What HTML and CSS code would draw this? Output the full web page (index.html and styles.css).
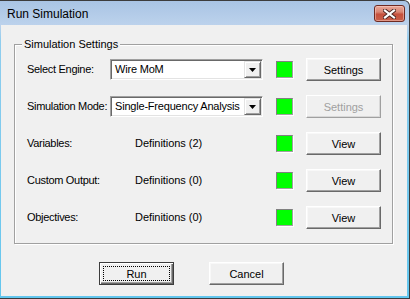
FILE: index.html
```html
<!DOCTYPE html>
<html>
<head>
<meta charset="utf-8">
<link rel="stylesheet" href="styles.css">
</head>
<body>
<div class="window">
  <div class="titlebar">
    <span class="title">Run Simulation</span>
    <div class="close">
      <svg width="13" height="10" viewBox="0 0 13 10">
        <path d="M2 1.5 L11 8.5 M11 1.5 L2 8.5" stroke="#4a2420" stroke-width="4" stroke-linecap="square" fill="none"/>
        <path d="M2 1.5 L11 8.5 M11 1.5 L2 8.5" stroke="#ffffff" stroke-width="2.2" stroke-linecap="square" fill="none"/>
      </svg>
    </div>
  </div>
  <div class="client">
    <div class="group">
      <div class="legend">Simulation Settings</div>
      <div class="grid">
        <div class="label">Select Engine:</div>
        <div class="combo">
          <span class="combo-text">Wire MoM</span>
          <span class="combo-btn"><svg width="7" height="4" viewBox="0 0 7 4"><polygon points="0,0 7,0 3.5,4" fill="#000"/></svg></span>
        </div>
        <div class="led"></div>
        <button class="btn">Settings</button>

        <div class="label">Simulation Mode:</div>
        <div class="combo">
          <span class="combo-text">Single-Frequency Analysis</span>
          <span class="combo-btn"><svg width="7" height="4" viewBox="0 0 7 4"><polygon points="0,0 7,0 3.5,4" fill="#000"/></svg></span>
        </div>
        <div class="led"></div>
        <button class="btn disabled">Settings</button>

        <div class="label">Variables:</div>
        <div class="defs">Definitions (2)</div>
        <div class="led"></div>
        <button class="btn">View</button>

        <div class="label">Custom Output:</div>
        <div class="defs">Definitions (0)</div>
        <div class="led"></div>
        <button class="btn">View</button>

        <div class="label">Objectives:</div>
        <div class="defs">Definitions (0)</div>
        <div class="led"></div>
        <button class="btn">View</button>
      </div>
    </div>
    <div class="actions">
      <button class="btn default"><span class="focus">Run</span></button>
      <button class="btn">Cancel</button>
    </div>
  </div>
</div>
</body>
</html>
```

FILE: styles.css
```css
html, body {
  margin: 0;
  padding: 0;
  width: 410px;
  height: 299px;
  overflow: hidden;
  background: #ffffff;
}

.window {
  box-sizing: border-box;
  width: 410px;
  height: 299px;
  border-top: 1px solid #3c3c3c;
  border-right: 1px solid #3c3c3c;
  border-bottom: 1px solid #3c3c3c;
  border-radius: 0 6px 0 0;
  background: linear-gradient(to bottom, #a9c4e4 0px, #bcd2ec 24px, #8fcdee 40px, #62c6ee 100%);
  padding: 0 2px 2px 1px;
  display: flex;
  flex-direction: column;
  font-family: "Liberation Sans", Arial, sans-serif;
}

.titlebar {
  height: 24px;
  display: flex;
  align-items: flex-start;
  margin-right: -2px;
  margin-left: -1px;
}

.title {
  font-size: 12px;
  line-height: 16px;
  color: #000;
  padding: 5px 0 0 7px;
}

.close {
  margin-left: auto;
  margin-top: 4px;
  margin-right: 4px;
  box-sizing: border-box;
  width: 31px;
  height: 17px;
  border: 1px solid #6e2a22;
  border-radius: 3px;
  background: linear-gradient(to bottom, #e9a898 0%, #d98674 40%, #c5503c 55%, #c9604a 100%);
  box-shadow: inset 0 0 0 1px rgba(255, 220, 210, 0.45);
  display: flex;
  align-items: center;
  justify-content: center;
}

.close svg {
  display: block;
}

.client {
  box-sizing: border-box;
  height: 271px;
  background: #f0f0f0;
  padding-top: 19px;
  font-size: 11px;
  color: #000;
}

.group {
  margin: 0 14px 0 13px;
  border: 1px solid #a0a0a0;
  box-shadow: inset 1px 1px 0 #ffffff, 1px 1px 0 #ffffff;
  padding: 0 11px 14px 12px;
}

.legend {
  width: fit-content;
  margin: -8px 0 0 -5px;
  padding: 0 2px;
  line-height: 14px;
  background: #f0f0f0;
}

.grid {
  margin-top: 7px;
  display: grid;
  grid-template-columns: 70px 153px 17px 75px;
  grid-auto-rows: 23px;
  column-gap: 13px;
  row-gap: 14px;
  align-items: center;
}

.label {
  line-height: 13px;
  white-space: nowrap;
  letter-spacing: -0.3px;
}

.defs {
  line-height: 13px;
  padding-left: 25px;
  white-space: nowrap;
  letter-spacing: -0.05px;
}

.combo {
  box-sizing: border-box;
  height: 21px;
  border: 1px solid;
  border-color: #a0a0a0 #ffffff #ffffff #a0a0a0;
  box-shadow: inset 1px 1px 0 #696969, inset -1px -1px 0 #e3e3e3;
  background: #ffffff;
  padding: 1px;
  display: flex;
  align-items: center;
}

.combo-text {
  flex: 1;
  padding-left: 3px;
  line-height: 17px;
  white-space: nowrap;
  overflow: hidden;
  letter-spacing: -0.2px;
}

.combo-btn {
  box-sizing: border-box;
  width: 17px;
  height: 17px;
  border: 1px solid;
  border-color: #e3e3e3 #696969 #696969 #e3e3e3;
  box-shadow: inset 1px 1px 0 #ffffff, inset -1px -1px 0 #a0a0a0;
  background: #f0f0f0;
  display: flex;
  align-items: center;
  justify-content: center;
}

.combo-btn svg {
  display: block;
  margin-top: 1px;
}

.led {
  box-sizing: border-box;
  width: 17px;
  height: 17px;
  background: #00ff00;
  border: 1px solid;
  border-color: #808080 #a0a0a0 #a0a0a0 #808080;
  box-shadow: 1px 1px 0 #ffffff;
}

.btn {
  box-sizing: border-box;
  width: 75px;
  height: 23px;
  margin: 0;
  padding: 0;
  font-family: "Liberation Sans", Arial, sans-serif;
  font-size: 11px;
  color: #000;
  background: #f0f0f0;
  border: 1px solid;
  border-color: #ffffff #696969 #696969 #ffffff;
  box-shadow: inset -1px -1px 0 #a0a0a0, inset 1px 1px 0 #f8f8f8;
  border-radius: 0;
  display: flex;
  align-items: center;
  justify-content: center;
}

.btn.disabled {
  color: #a0a0a0;
  border-color: #ffffff #a0a0a0 #a0a0a0 #ffffff;
  box-shadow: inset -1px -1px 0 #d8d8d8;
}

.btn.default {
  border: 1px solid #3c3c3c;
  box-shadow: inset 1px 1px 0 #ffffff, inset -1px -1px 0 #696969, inset -2px -2px 0 #a0a0a0;
  padding: 3px;
  align-items: stretch;
}

.focus {
  flex: 1;
  border: 1px dotted #000;
  display: flex;
  align-items: center;
  justify-content: center;
}

.actions {
  display: flex;
  gap: 35px;
  padding-left: 98px;
  margin-top: 18px;
}
```
